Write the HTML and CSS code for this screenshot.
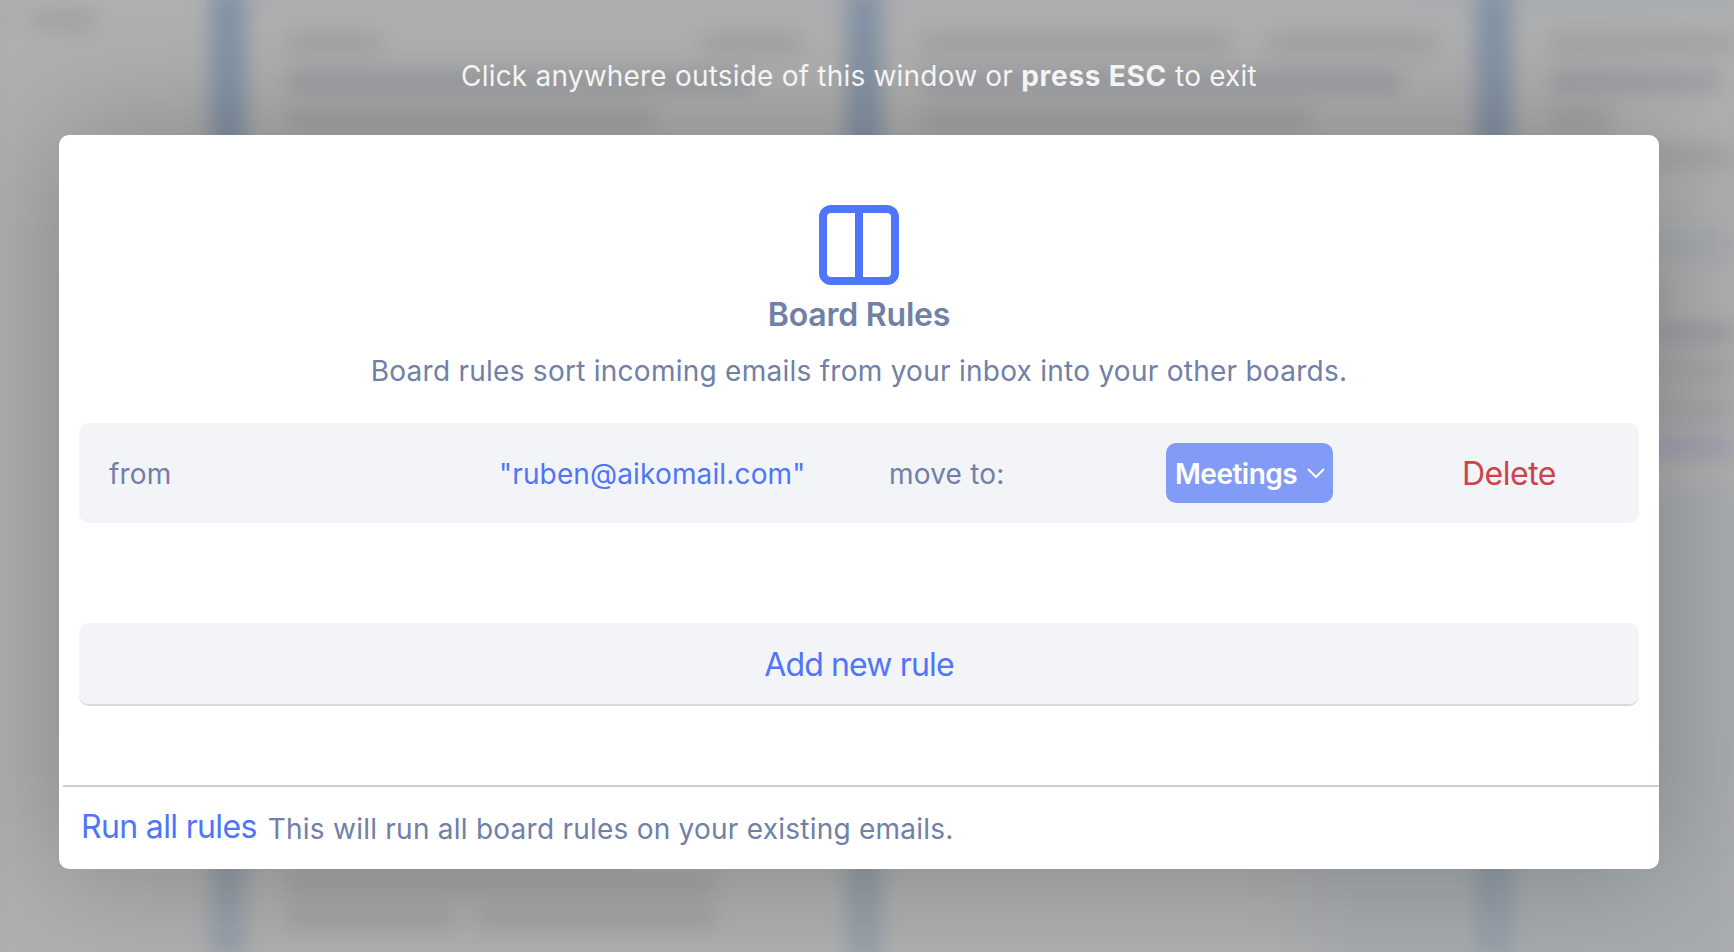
FILE: index.html
```html
<!DOCTYPE html>
<html lang="en">
<head>
<meta charset="utf-8">
<title>Board Rules</title>
<link rel="stylesheet" href="styles.css">
</head>
<body>
<div class="boards" aria-hidden="true">
  <div class="sidebar"><i class="smudge tag"></i><i class="smudge tag wide"></i></div>
  <div class="rail"></div>
  <div class="board first">
    <div class="card">
      <div class="line"><i class="smudge w95"></i><i class="smudge w100"></i></div>
      <div class="line"><i class="smudge strong w470"></i></div>
      <div class="line"><i class="smudge w370"></i></div>
    </div>
    <div class="card tail">
      <div class="line"><i class="smudge w340"></i></div>
      <div class="line"><i class="smudge w430"></i></div>
      <div class="line packed"><i class="smudge w170"></i><i class="smudge w240"></i></div>
    </div>
  </div>
  <div class="rail"></div>
  <div class="board second">
    <div class="card">
      <div class="line"><i class="smudge w310"></i><i class="smudge w170"></i></div>
      <div class="line"><i class="smudge strong w480"></i></div>
      <div class="line"><i class="smudge w390"></i></div>
    </div>
  </div>
  <div class="rail"></div>
  <div class="board third">
    <div class="card short">
      <div class="line"><i class="smudge full"></i></div>
      <div class="line"><i class="smudge strong w170"></i></div>
      <div class="line"><i class="smudge w60"></i></div>
      <div class="line"><i class="smudge full"></i></div>
    </div>
    <div class="card next">
      <div class="line"><i class="smudge w120"></i></div>
      <div class="line"><i class="smudge strong full"></i></div>
      <div class="line"><i class="smudge full"></i></div>
      <div class="line"><i class="smudge full"></i></div>
      <div class="line"><i class="smudge link full"></i></div>
    </div>
  </div>
</div>
<div class="overlay">
  <p class="hint">Click anywhere outside of this window or <b>press ESC</b> to exit</p>
  <main class="modal">
    <svg class="icon" viewBox="0 0 80 80"><rect x="4" y="4" width="72" height="72" rx="8"/><path d="M40 4v72"/></svg>
    <h1 class="title">Board Rules</h1>
    <p class="subtitle">Board rules sort incoming emails from your inbox into your other boards.</p>
    <div class="rule">
      <span class="from">from</span>
      <span class="address">"ruben@aikomail.com"</span>
      <span class="move">move to:</span>
      <button class="picker"><span class="picker-label">Meetings</span><svg class="chevron" viewBox="0 0 18 11"><path d="M1 1l8 8 8-8"/></svg></button>
      <button class="delete">Delete</button>
    </div>
    <button class="add"><span class="add-label">Add new rule</span></button>
    <footer class="footer"><button class="run">Run all rules</button><span class="note">This will run all board rules on your existing emails.</span></footer>
  </main>
</div>
</body>
</html>
```
FILE: styles.css
```css
* { box-sizing: border-box; }
body { margin: 0; height: 952px; overflow: hidden; background: #b0b0b0; font-family: Inter, "Liberation Sans", sans-serif; }
p, h1 { margin: 0; }
button { margin: 0; padding: 0; border: 0; background: none; font: inherit; }

.boards { display: flex; width: 1734px; height: 972px; margin-top: -10px; padding-top: 10px; filter: blur(10px); background: linear-gradient(90deg, #b0b0b0 1400px, #a7acaf 1500px); }
.sidebar { flex: none; width: 210px; display: flex; gap: 22px; padding-top: 8px; }
.rail { flex: none; width: 36px; margin-top: -10px; background: linear-gradient(#8493a5 15%, #909ba4 88%, #9aa2ad); }
.smudge { display: block; height: 22px; border-radius: 6px; background: rgba(105, 110, 125, .2); }
.smudge.tag { width: 8px; }
.smudge.tag.wide { width: 66px; }
.smudge.strong { background: rgba(100, 105, 118, .26); }
.smudge.link { background: rgba(115, 120, 180, .3); }
.smudge.full { width: 100%; }
.board { flex: none; border-top: 8px solid #a2a9af; padding-left: 20px; height: 962px; }
.first { width: 600px; }
.second { width: 594px; background: linear-gradient(90deg, #b0b0b0 350px, #a7acaf 480px) 0 500px no-repeat, #b0b0b0; }
.third { flex: 1; min-width: 0; background: #a7acaf; padding-left: 0; }
.card { padding: 24px 20px 0; display: flex; flex-direction: column; gap: 16px; background: #b0b0b0; }
.board.second .card { background: none; }
.line { display: flex; justify-content: space-between; max-width: 515px; }
.line.packed { justify-content: flex-start; gap: 20px; }
.tail { padding-top: 711px; gap: 11px; }
.third .card { padding-left: 38px; padding-right: 0; }
.third .short { height: 220px; }
.third .next { margin-top: 34px; padding-top: 22px; height: 227px; }
.w60 { width: 60px; }
.w95 { width: 95px; }
.w100 { width: 100px; }
.w120 { width: 120px; }
.w170 { width: 170px; }
.w240 { width: 240px; }
.w310 { width: 310px; }
.w340 { width: 340px; }
.w370 { width: 370px; }
.w390 { width: 390px; }
.w430 { width: 430px; }
.w470 { width: 470px; }
.w480 { width: 480px; }

.overlay { position: absolute; inset: 0; overflow: hidden; padding: 56px 75px 0 59px; display: flex; flex-direction: column; }
.hint { position: relative; z-index: 1; height: 78.5px; line-height: 40px; text-align: center; font-size: 28px; letter-spacing: .2px; color: #f4f4f4; white-space: nowrap; }
.hint b { letter-spacing: .75px; }
.modal { width: 1600px; height: 734px; border-radius: 10px; background: #fff; box-shadow: 0 0 130px rgba(0, 0, 0, .25); display: flex; flex-direction: column; padding-top: 70px; color: #7080a7; }
.icon { width: 80px; height: 80px; align-self: center; fill: none; stroke: #4f76f9; stroke-width: 8; }
.title { margin-top: 10.5px; height: 40px; line-height: 40px; text-align: center; font-size: 32px; font-weight: 600; letter-spacing: -.2px; }
.subtitle { margin-top: 15.5px; height: 40px; line-height: 40px; text-align: center; font-size: 28px; letter-spacing: .26px; white-space: nowrap; }
.rule { margin: 32.5px 20px 0; height: 100px; flex: none; border-radius: 10px; background: #f2f4f8; display: grid; grid-template-columns: 390px 390px 277px 296px 1fr; padding: 1px 0 0 30px; align-items: center; font-size: 28px; letter-spacing: .2px; white-space: nowrap; }
.address { color: #4f76f9; letter-spacing: .15px; }
.picker { width: 167px; height: 60px; margin-top: -1px; border-radius: 10px; background: #829bf7; color: #fff; font-weight: 600; letter-spacing: -.5px; display: flex; align-items: center; justify-content: space-between; padding: 1px 8px 0 9px; }
.chevron { width: 18px; height: 11px; fill: none; stroke: #fff; stroke-width: 2; }
.delete { text-align: left; font-size: 32px; letter-spacing: -.5px; color: #cd434a; }
.add { margin: 100px 20px 0; height: 83px; flex: none; border-radius: 10px; background: #f2f4f8; border-bottom: 2px solid #d7d9df; padding-top: 2px; font-size: 32px; letter-spacing: -.85px; color: #4f76f9; }
.footer { margin: 79px 0 0 4px; border-top: 2px solid #d0d0d0; flex: 1; display: flex; align-items: flex-start; gap: 11px; padding: 18px 0 0 18px; white-space: nowrap; }
.run { line-height: 44px; font-size: 32px; letter-spacing: -.65px; color: #4f76f9; }
.note { line-height: 48px; font-size: 28px; letter-spacing: .24px; }
```
